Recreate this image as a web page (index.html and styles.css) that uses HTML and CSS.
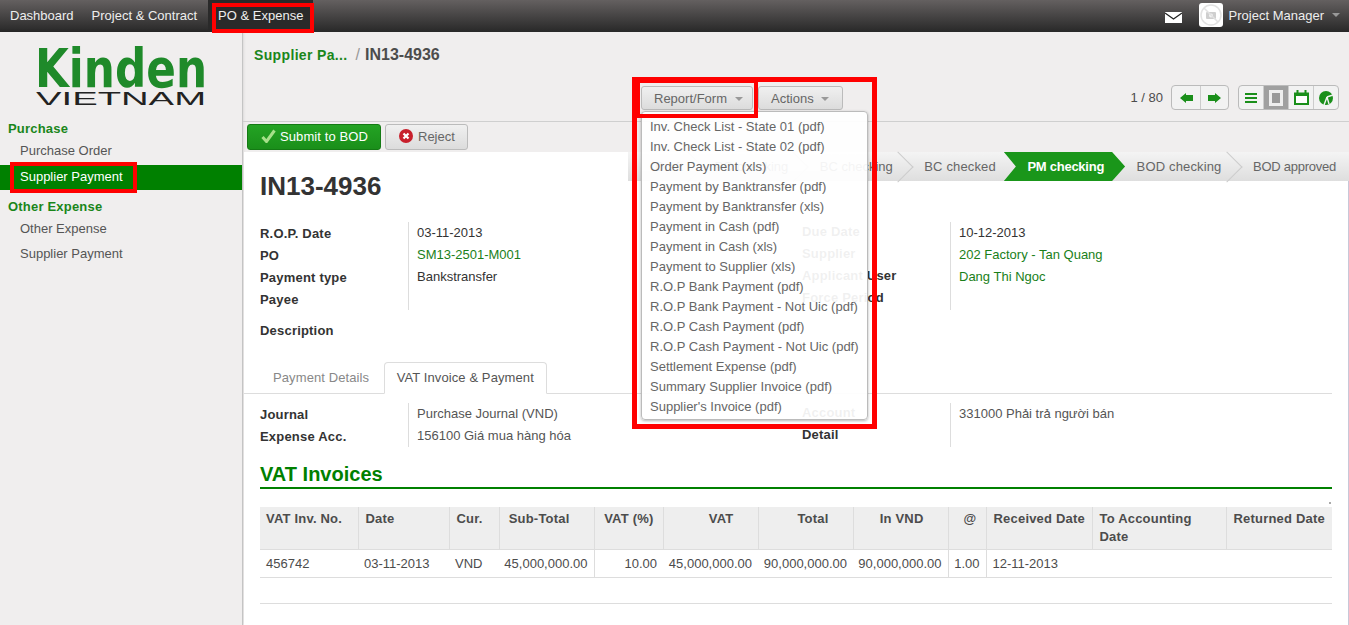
FILE: index.html
```html
<!DOCTYPE html>
<html lang="en">
<head>
    <meta charset="UTF-8">
    <meta name="viewport" content="width=device-width, initial-scale=1.0">
    <title>Supplier Payment - IN13-4936</title>
    <link rel="stylesheet" href="styles.css">
</head>
<body>
<header class="topbar">
    <nav class="topnav">
        <a>Dashboard</a>
        <a>Project &amp; Contract</a>
        <a class="active">PO &amp; Expense</a>
    </nav>
    <div class="topright">
        <svg class="mail" width="17" height="11" viewBox="0 0 17 11"><rect width="17" height="11" fill="#fff"/><path d="M0 1l8.500 6L17 1" fill="none" stroke="#222" stroke-width="1.300"/></svg>
        <span class="avatar">
            <svg width="24" height="24" viewBox="0 0 24 24"><circle cx="12" cy="12" r="10" fill="none" stroke="#e2e2e2" stroke-width="1.500"/><rect x="7" y="9" width="10" height="7" rx="1" fill="#cfcfcf"/><circle cx="12" cy="12.500" r="2" fill="#f2f2f2"/><path d="M5 5l14 14" stroke="#e2e2e2" stroke-width="1.500"/></svg>
        </span>
        <span class="username">Project Manager</span>
        <span class="caret caret-top"></span>
    </div>
</header>

<div class="layout">
    <aside class="sidebar">
        <div class="logo">
            <svg width="206" height="64" viewBox="0 0 206 64">
                <text x="0" y="42" class="logo-name" textLength="172" lengthAdjust="spacingAndGlyphs">Kinden</text>
                <text x="1" y="60" class="logo-sub" textLength="170" lengthAdjust="spacingAndGlyphs">VIETNAM</text>
            </svg>
        </div>
        <div class="menu-head">Purchase</div>
        <a class="menu-item">Purchase Order</a>
        <a class="menu-item selected">Supplier Payment</a>
        <div class="menu-head second">Other Expense</div>
        <a class="menu-item">Other Expense</a>
        <a class="menu-item">Supplier Payment</a>
    </aside>

    <main class="main">
        <div class="head">
            <div class="breadcrumb">
                <span class="crumb-link">Supplier Pa...</span>
                <span class="crumb-sep">/</span>
                <span class="crumb-now">IN13-4936</span>
            </div>
            <div class="head-row">
                <div class="head-buttons">
                    <button class="btn btn-report">Report/Form <span class="caret"></span></button>
                    <button class="btn btn-actions">Actions <span class="caret"></span></button>
                </div>
                <div class="pager">
                    <span class="pager-text">1 / 80</span>
                    <div class="btn-group">
                        <button class="icon-btn wide"><svg width="13" height="10" viewBox="0 0 13 10"><path d="M0 5l6-5v2h7v6H6v2z" fill="#1a8f1a"/></svg></button>
                        <button class="icon-btn wide"><svg width="13" height="10" viewBox="0 0 13 10"><path d="M13 5L7 0v2H0v6h7v2z" fill="#1a8f1a"/></svg></button>
                    </div>
                    <div class="btn-group">
                        <button class="icon-btn"><svg width="12" height="10" viewBox="0 0 12 10"><path d="M0 1h12M0 5h12M0 9h12" stroke="#1a8f1a" stroke-width="2"/></svg></button>
                        <button class="icon-btn on"><svg width="14" height="16" viewBox="0 0 14 16"><rect x="1.500" y="1.500" width="11" height="13" fill="#999" stroke="#eee" stroke-width="3"/></svg></button>
                        <button class="icon-btn"><svg width="15" height="15" viewBox="0 0 15 15"><path d="M1 3.500h13V14H1z" fill="#fff" stroke="#1a8f1a" stroke-width="2"/><path d="M0 3h15v3H0z" fill="#1a8f1a"/><path d="M3.500 0v3M11.500 0v3" stroke="#1a8f1a" stroke-width="2"/></svg></button>
                        <button class="icon-btn"><svg width="14" height="14" viewBox="0 0 14 14"><circle cx="7" cy="7" r="7" fill="#1a8f1a"/><path d="M8 6L5 14M8 6l2 7M8 6l6-2" stroke="#f2f2f2" stroke-width="1.400" fill="none"/></svg></button>
                    </div>
                </div>
            </div>
        </div>

        <div class="toolbar">
            <button class="btn-submit"><svg width="15" height="14" viewBox="0 0 15 14"><path d="M1.500 8l4 4.500L13.500 1.500" fill="none" stroke="#a6e08a" stroke-width="3"/></svg>Submit to BOD</button>
            <button class="btn-reject"><svg width="14" height="14" viewBox="0 0 14 14"><circle cx="7" cy="7" r="7" fill="#c8202c"/><path d="M4.500 4.500l5 5M9.500 4.500l-5 5" stroke="#fff" stroke-width="2.200"/></svg>Reject</button>
        </div>

        <div class="sheet">
            <div class="statusbar">
                <span class="step">Draft</span>
                <span class="step">PO checking</span>
                <span class="step">BC checking</span>
                <span class="step no-arrow wider">BC checked</span>
                <span class="step current no-arrow">PM checking</span>
                <span class="step wider">BOD checking</span>
                <span class="step last no-arrow">BOD approved</span>
            </div>

            <h1 class="title">IN13-4936</h1>

            <div class="fields top-fields">
                <div class="field-col">
                    <div class="labels">
                        <div>R.O.P. Date</div>
                        <div>PO</div>
                        <div>Payment type</div>
                        <div>Payee</div>
                    </div>
                    <div class="values">
                        <div>03-11-2013</div>
                        <div class="link">SM13-2501-M001</div>
                        <div>Bankstransfer</div>
                        <div>&nbsp;</div>
                    </div>
                </div>
                <div class="field-col right-col">
                    <div class="labels">
                        <div>Due Date</div>
                        <div>Supplier</div>
                        <div>Applicant User</div>
                        <div>Force Period</div>
                    </div>
                    <div class="values">
                        <div>10-12-2013</div>
                        <div class="link">202 Factory - Tan Quang</div>
                        <div class="link">Dang Thi Ngoc</div>
                        <div>&nbsp;</div>
                    </div>
                </div>
            </div>
            <div class="description">Description</div>

            <div class="tabs">
                <a class="tab">Payment Details</a>
                <a class="tab active">VAT Invoice &amp; Payment</a>
            </div>

            <div class="fields tab-fields">
                <div class="field-col">
                    <div class="labels">
                        <div>Journal</div>
                        <div>Expense Acc.</div>
                    </div>
                    <div class="values">
                        <div>Purchase Journal (VND)</div>
                        <div>156100 Giá mua hàng hóa</div>
                    </div>
                </div>
                <div class="field-col right-col">
                    <div class="labels">
                        <div>Account</div>
                        <div>Detail</div>
                    </div>
                    <div class="values">
                        <div>331000 Phải trả người bán</div>
                        <div>&nbsp;</div>
                    </div>
                </div>
            </div>

            <h2 class="section">VAT Invoices</h2>
            <div class="dot"></div>

            <table class="grid">
                <colgroup>
                    <col class="c1"><col class="c2"><col class="c3"><col class="c4"><col class="c5"><col class="c6">
                    <col class="c6"><col class="c6"><col class="c7"><col class="c8"><col class="c9"><col class="c10">
                </colgroup>
                <thead>
                    <tr>
                        <th>VAT Inv. No.</th>
                        <th>Date</th>
                        <th>Cur.</th>
                        <th class="amt">Sub-Total</th>
                        <th class="amt small">VAT (%)</th>
                        <th class="amt">VAT</th>
                        <th class="amt">Total</th>
                        <th class="amt">In VND</th>
                        <th class="amt small">@</th>
                        <th>Received Date</th>
                        <th>To Accounting Date</th>
                        <th>Returned Date</th>
                    </tr>
                </thead>
                <tbody>
                    <tr>
                        <td>456742</td>
                        <td>03-11-2013</td>
                        <td>VND</td>
                        <td class="num">45,000,000.00</td>
                        <td class="num line">10.00</td>
                        <td class="num">45,000,000.00</td>
                        <td class="num">90,000,000.00</td>
                        <td class="num">90,000,000.00</td>
                        <td class="num line">1.00</td>
                        <td class="line">12-11-2013</td>
                        <td></td>
                        <td></td>
                    </tr>
                </tbody>
            </table>
            <div class="grid-foot"></div>
        </div>
    </main>
</div>

<ul class="dropdown">
    <li>Inv. Check List - State 01 (pdf)</li>
    <li>Inv. Check List - State 02 (pdf)</li>
    <li>Order Payment (xls)</li>
    <li>Payment by Banktransfer (pdf)</li>
    <li>Payment by Banktransfer (xls)</li>
    <li>Payment in Cash (pdf)</li>
    <li>Payment in Cash (xls)</li>
    <li>Payment to Supplier (xls)</li>
    <li>R.O.P Bank Payment (pdf)</li>
    <li>R.O.P Bank Payment - Not Uic (pdf)</li>
    <li>R.O.P Cash Payment (pdf)</li>
    <li>R.O.P Cash Payment - Not Uic (pdf)</li>
    <li>Settlement Expense (pdf)</li>
    <li>Summary Supplier Invoice (pdf)</li>
    <li>Supplier's Invoice (pdf)</li>
</ul>

<div class="mark mark-nav"></div>
<div class="mark mark-side"></div>
<div class="mark mark-menu"></div>
<div class="mark mark-report"></div>
</body>
</html>
```

FILE: styles.css
```css
* {
    box-sizing: border-box;
}
body {
    margin: 0;
    height: 100vh;
    overflow: hidden;
    display: flex;
    flex-direction: column;
    font-family: "Liberation Sans", Arial, sans-serif;
    font-size: 13px;
    color: #4c4c4c;
    background: #f0eeee;
}
button {
    font-family: inherit;
    cursor: pointer;
}

/* top bar */
.topbar {
    height: 32px;
    flex: none;
    display: flex;
    justify-content: space-between;
    background: linear-gradient(#646060, #282828);
}
.topnav {
    display: flex;
}
.topnav a {
    padding: 0 10px;
    line-height: 31px;
    color: #eee;
}
.topnav a:first-child {
    padding-right: 8px;
}
.topnav a:nth-child(2) {
    padding-right: 11px;
}
.topnav a.active {
    background: #2a2a2a;
}
.topright {
    display: flex;
    align-items: center;
    padding: 0 9px 2px 0;
    color: #eee;
}
.mail {
    margin: 4px 17px 0 0;
}
.avatar {
    width: 24px;
    height: 24px;
    margin-right: 6px;
    border-radius: 3px;
    background: #fff;
}
.username {
    margin-right: 8px;
}
.caret {
    display: inline-block;
    vertical-align: middle;
    border-top: 4px solid #999;
    border-left: 4px solid transparent;
    border-right: 4px solid transparent;
}

.layout {
    flex: 1;
    display: flex;
    min-height: 0;
}

/* sidebar */
.sidebar {
    width: 243px;
    flex: none;
    border-right: 1px solid #c4c4c4;
    box-shadow: 0 0 3px rgba(0, 0, 0, 0.15);
}
.logo {
    height: 78px;
    padding: 13px 0 0 35px;
}
.logo-name {
    font-family: "DejaVu Sans", sans-serif;
    font-weight: bold;
    font-size: 53px;
    fill: #1f8a2a;
}
.logo-sub {
    font-family: "Liberation Sans", sans-serif;
    font-size: 18px;
    fill: #222;
}
.menu-head {
    margin: 11px 0 1px 8px;
    line-height: 16px;
    font-weight: bold;
    letter-spacing: 0.2px;
    color: #1a861a;
}
.menu-head.second {
    margin-top: 9px;
}
.menu-item {
    display: block;
    height: 25px;
    padding-left: 20px;
    line-height: 25px;
    color: #555;
}
.menu-item.selected {
    margin-top: 2px;
    line-height: 23px;
    color: #fff;
    background: #008000;
}

/* header of the content */
.main {
    flex: 1;
    min-width: 0;
    display: flex;
    flex-direction: column;
}
.head {
    height: 90px;
    flex: none;
    border-bottom: 1px solid #cfcfcf;
}
.breadcrumb {
    height: 53px;
    padding: 14px 0 0 11px;
    display: flex;
    align-items: baseline;
}
.crumb-link {
    font-size: 14px;
    font-weight: bold;
    letter-spacing: 0.35px;
    color: #1a861a;
}
.crumb-sep {
    margin: 0 5px 0 8px;
    font-size: 16px;
    color: #999;
}
.crumb-now {
    font-size: 16px;
    font-weight: bold;
    color: #4c4c4c;
}
.head-row {
    display: flex;
    justify-content: space-between;
    padding-right: 10px;
}
.head-buttons {
    display: flex;
    gap: 5px;
    padding: 1px 0 0 398px;
}
.btn {
    height: 24px;
    padding: 0 0 0 12px;
    text-align: left;
    font-size: 13px;
    color: #666;
    border: 1px solid #bbb;
    border-radius: 3px;
    background: linear-gradient(#f0f0f0, #dcdcdc);
}
.btn-report {
    width: 112px;
}
.btn-actions {
    width: 85px;
}
.btn .caret {
    margin-left: 4px;
}
.pager {
    display: flex;
    align-items: center;
    gap: 9px;
}
.pager-text {
    margin-right: -1px;
}
.btn-group {
    display: flex;
    height: 25px;
    border: 1px solid #bbb;
    border-radius: 4px;
    overflow: hidden;
    background: #f2f2f2;
}
.icon-btn {
    width: 25px;
    padding: 0;
    display: flex;
    align-items: center;
    justify-content: center;
    border: none;
    border-left: 1px solid #ccc;
    background: none;
}
.icon-btn:first-child {
    width: 24px;
    border-left: none;
}
.icon-btn.wide {
    width: 28px;
}
.icon-btn.on {
    background: #a0a0a0;
}

/* action bar */
.toolbar {
    height: 30px;
    flex: none;
    display: flex;
    gap: 4px;
    padding: 2px 0 0 4px;
}
.btn-submit, .btn-reject {
    height: 26px;
    display: flex;
    align-items: center;
    gap: 5px;
    padding: 0 0 2px 13px;
    font-size: 13px;
    border-radius: 3px;
}
.btn-submit {
    width: 134px;
    gap: 4px;
    letter-spacing: 0.1px;
    color: #fff;
    border: 1px solid #147a14;
    background: linear-gradient(#24a324, #1a8f1a);
}
.btn-reject {
    width: 83px;
    color: #666;
    border: 1px solid #bbb;
    background: linear-gradient(#f0f0f0, #dcdcdc);
}

/* form sheet */
.sheet {
    flex: 1;
    min-height: 0;
    margin-left: 1px;
    padding: 0 16px;
    background: #fff;
    border-right: 1px solid #c8c8d8;
}
.statusbar {
    height: 29px;
    margin: 0 -17px 0 368px;
    display: flex;
    justify-content: flex-end;
    background: linear-gradient(#f4f4f4, #dedede);
}
.step {
    position: relative;
    z-index: 0;
    padding: 0 20px 0 11.5px;
    line-height: 29px;
    color: #666;
    white-space: nowrap;
}
.step.wider {
    letter-spacing: 0.15px;
}
.step::after {
    content: "";
    position: absolute;
    top: 4px;
    right: 4px;
    width: 21px;
    height: 21px;
    transform: rotate(45deg);
    border-top: 1px solid #ccc;
    border-right: 1px solid #ccc;
}
.step.no-arrow::after {
    display: none;
}
.step.last {
    padding-right: 13px;
    letter-spacing: -0.25px;
}
.step.current {
    padding-right: 21px;
    font-weight: bold;
    letter-spacing: -0.25px;
    color: #fff;
}
.step.current::before {
    content: "";
    position: absolute;
    z-index: -1;
    top: 0;
    bottom: 0;
    left: -12px;
    right: 0;
    background: #1a961a;
    clip-path: polygon(0 0, calc(100% - 13px) 0, 100% 50%, calc(100% - 13px) 100%, 0 100%, 12px 50%);
}
.title {
    margin: -10px 0 0;
    height: 51px;
    font-size: 26px;
    line-height: 30px;
    color: #333;
}
.fields {
    display: grid;
    grid-template-columns: 542px 1fr;
}
.field-col {
    display: flex;
}
.labels {
    width: 148px;
    flex: none;
    font-weight: bold;
    letter-spacing: 0.2px;
    color: #333;
}
.labels div, .values div {
    position: relative;
    height: 22px;
    line-height: 22px;
}
.labels div {
    top: 1px;
}
.right-col .labels div {
    top: -1px;
}
.values {
    flex: 1;
    padding-left: 8px;
    border-left: 1px solid #ddd;
}
.values div {
    color: #333;
}
.top-fields {
    height: 88px;
}
.values .link {
    color: #1a7f1a;
}
.description {
    margin-top: 13px;
    height: 20px;
    font-weight: bold;
    letter-spacing: 0.2px;
    color: #333;
}
.tabs {
    margin: 19px 0 0 -16px;
    height: 32px;
    padding-left: 16px;
    display: flex;
    align-items: stretch;
    letter-spacing: 0.1px;
    border-bottom: 1px solid #ddd;
}
.tab {
    padding: 0 13px;
    line-height: 32px;
    color: #888;
}
.tab.active {
    margin-left: 1.5px;
    padding: 0 12px;
    height: 32px;
    line-height: 30px;
    color: #555;
    background: #fff;
    border: 1px solid #ddd;
    border-bottom-color: #fff;
    border-radius: 4px 4px 0 0;
}
.tab-fields {
    margin-top: 9px;
    height: 44px;
}
.tab-fields .values div {
    color: #555;
}
.section {
    margin: 14px 0 0;
    height: 28px;
    font-size: 20px;
    line-height: 26px;
    color: #008000;
    border-bottom: 2px solid #008000;
}
.dot {
    width: 2px;
    height: 2px;
    margin: 13px 1px 0 auto;
    background: #aaa;
}
.grid {
    width: 1072px;
    margin-top: 3px;
    border-collapse: collapse;
    table-layout: fixed;
}
.c1 { width: 98px; }
.c2 { width: 91px; }
.c3 { width: 50px; }
.c4 { width: 95px; }
.c5 { width: 69px; }
.c6 { width: 95px; }
.c7 { width: 38px; }
.c8 { width: 106px; }
.c9 { width: 134px; }
.c10 { width: 106px; }
.grid th {
    height: 42px;
    padding: 3px 6px 0 7px;
    vertical-align: top;
    text-align: left;
    line-height: 18px;
    letter-spacing: 0.2px;
    color: #4c4c4c;
    background: #eee;
    border-left: 1px solid #ddd;
    border-bottom: 1px solid #ddd;
}
.grid th:first-child {
    padding-left: 6px;
    border-left: none;
}
.grid th.amt {
    padding-right: 24px;
    text-align: right;
}
.grid th.small {
    padding-right: 9px;
}
.grid td {
    height: 28px;
    padding: 0 6px;
    white-space: nowrap;
    color: #4c4c4c;
    border-bottom: 1px solid #ddd;
}
.grid td.num {
    padding-left: 0;
    text-align: right;
}
.grid td.line {
    border-left: 1px solid #ddd;
}
.grid-foot {
    margin-top: 25px;
    border-top: 1px solid #ddd;
}

/* report menu, open over the page */
.dropdown {
    position: absolute;
    left: 641px;
    top: 111px;
    width: 227px;
    margin: 0;
    padding: 5px 0 2px 8px;
    list-style: none;
    color: #666;
    background: rgba(255, 255, 255, 0.93);
    border: 1px solid #bbb;
    border-radius: 4px;
    box-shadow: 0 1px 3px rgba(0, 0, 0, 0.3);
}
.dropdown li {
    height: 20px;
    line-height: 20px;
    white-space: nowrap;
}

/* red marks of the screenshot */
.mark {
    position: absolute;
    border: 4px solid #f00;
}
.mark-nav {
    left: 212px;
    top: 3px;
    width: 102px;
    height: 30px;
}
.mark-side {
    left: 10px;
    top: 162px;
    width: 127px;
    height: 31px;
}
.mark-menu {
    left: 632px;
    top: 77px;
    width: 245px;
    height: 352px;
    border-width: 5px;
}
.mark-report {
    left: 636px;
    top: 79px;
    width: 122px;
    height: 39px;
}
```
